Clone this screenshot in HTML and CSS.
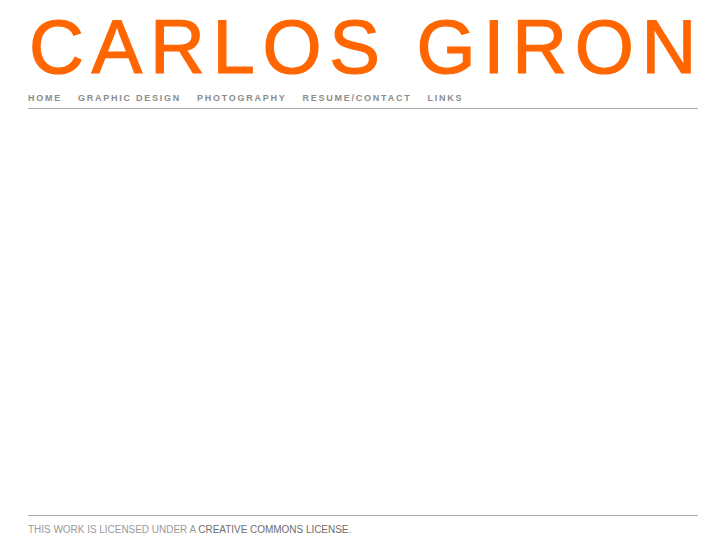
FILE: index.html
```html
<!DOCTYPE html>
<html>
<head>
<meta charset="utf-8">
<title>Carlos Giron</title>
<link rel="stylesheet" href="styles.css">
</head>
<body>
<div class="page">
  <header class="header">
    <h1 class="logo">CARLOS GIRON</h1>
    <nav class="nav">
      <a href="#">HOME</a>
      <a href="#">GRAPHIC DESIGN</a>
      <a href="#">PHOTOGRAPHY</a>
      <a href="#">RESUME/CONTACT</a>
      <a href="#">LINKS</a>
    </nav>
  </header>
  <main class="content"></main>
  <footer class="footer">
    THIS WORK IS LICENSED UNDER A <a href="#">CREATIVE COMMONS LICENSE</a>.
  </footer>
</div>
</body>
</html>
```
FILE: styles.css
```css
html, body {
  margin: 0;
  padding: 0;
  background: #fff;
}
.page {
  width: 670px;
  margin-left: 28px;
  height: 545px;
  display: flex;
  flex-direction: column;
  font-family: "Liberation Sans", Arial, sans-serif;
}
.logo {
  margin: 0 0 0 1px;
  padding-top: 7px;
  height: 78px;
  font-weight: normal;
  font-size: 76px;
  line-height: 80px;
  letter-spacing: 7.7px;
  color: #ff6600;
  -webkit-text-stroke: 1.2px #ff6600;
  white-space: nowrap;
}
.nav {
  display: flex;
  gap: 16px;
  padding-top: 8px;
  padding-bottom: 5px;
  border-bottom: 1px solid #aaa;
  font-size: 9px;
  font-weight: bold;
  line-height: 10px;
  letter-spacing: 1.75px;
}
.nav a {
  color: #8c8c8c;
  text-decoration: none;
}
.content {
  flex: 1;
}
.footer {
  border-top: 1px solid #aaa;
  margin-bottom: 9px;
  padding-top: 7px;
  font-size: 10px;
  line-height: 13px;
  color: #9a9a9a;
  letter-spacing: -0.03px;
}
.footer a {
  color: #6e6e6e;
  text-decoration: none;
}
```
